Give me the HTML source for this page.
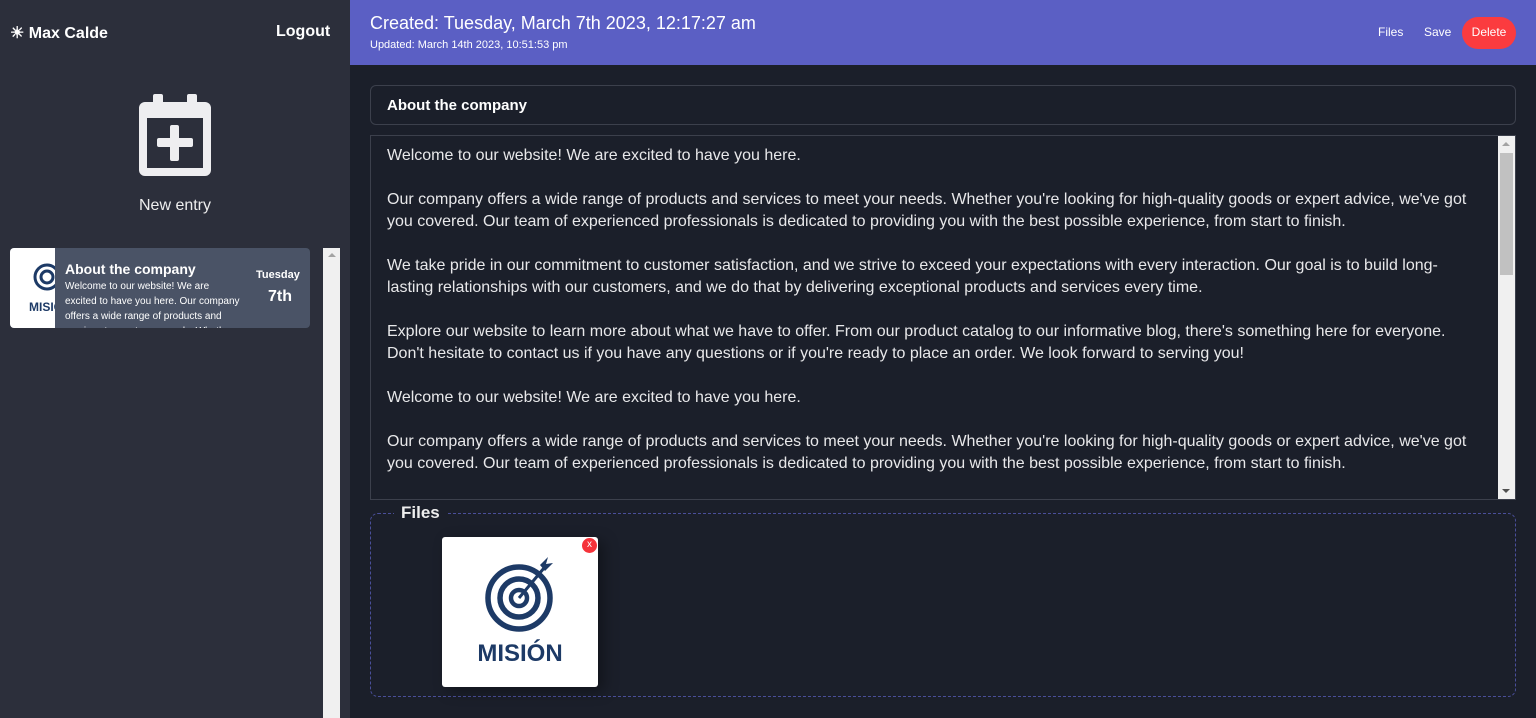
<!DOCTYPE html>
<html><head><style>
*{box-sizing:border-box;margin:0;padding:0}
body{width:1536px;height:718px;overflow:hidden;background:#1b1f2a;font-family:"Liberation Sans",sans-serif;color:#e8e8ea;position:relative}
.side{position:absolute;left:0;top:0;width:350px;height:718px;background:#2c2f3b}
.hdr{position:absolute;left:350px;top:0;width:1186px;height:65px;background:#5b5fc4}
</style></head><body>
<div class="side">
 <div style="position:absolute;left:10px;top:23px;font-size:16px;font-weight:bold;color:#fff">☀ Max Calde</div>
 <div style="position:absolute;left:276px;top:23px;font-size:16px;font-weight:bold;color:#fff">Logout</div>
 <svg style="position:absolute;left:139px;top:94px" width="72" height="82" viewBox="0 0 72 82">
  <rect x="14" y="0" width="10" height="14" rx="2" fill="#eeeef0"/><rect x="48" y="0" width="10" height="14" rx="2" fill="#eeeef0"/>
  <rect x="0" y="8" width="72" height="74" rx="6" fill="#eeeef0"/>
  <rect x="8" y="24" width="56" height="50" fill="#2c2f3b"/>
  <rect x="18" y="44" width="36" height="9" rx="2" fill="#eeeef0"/><rect x="31" y="31" width="9" height="36" rx="2" fill="#eeeef0"/>
 </svg>
 <div style="position:absolute;left:0;width:350px;top:197px;text-align:center;font-size:16px;color:#eee">New entry</div>
 <div style="position:absolute;left:10px;top:248px;width:300px;height:80px;border-radius:4px;background:#4a5366;overflow:hidden">
  <div style="position:absolute;left:0;top:0;width:45px;height:80px;background:#fff;overflow:hidden">
   <svg style="position:absolute;left:22px;top:14px" width="30" height="30"><circle cx="15" cy="15" r="12" fill="none" stroke="#1d3a66" stroke-width="3"/><circle cx="15" cy="15" r="6" fill="none" stroke="#1d3a66" stroke-width="3"/></svg>
   <div style="position:absolute;left:19px;top:52px;font-size:12px;font-weight:bold;color:#1d3a66">MISIÓN</div>
  </div>
  <div style="position:absolute;left:55px;top:13px;font-size:14px;font-weight:bold;color:#fff">About the company</div>
  <div style="position:absolute;left:55px;top:31px;width:176px;font-size:10px;line-height:15px;color:#fff">Welcome to our website! We are excited to have you here. Our company offers a wide range of products and services to meet your needs. Whether</div>
  <div style="position:absolute;left:246px;top:21px;font-size:11px;font-weight:bold;color:#fff">Tuesday</div>
  <div style="position:absolute;left:258px;top:40px;font-size:16px;font-weight:bold;color:#fff">7th</div>
 </div>
 <div style="position:absolute;left:323px;top:248px;width:17px;height:470px;background:#f0f0f0"><div style="margin:5px auto;width:0;height:0;border:4px solid transparent;border-bottom-color:#a3a3a3;border-top:0"></div></div>
</div>
<div class="hdr">
 <div style="position:absolute;left:20px;top:13px;font-size:18px;color:#fff">Created: Tuesday, March 7th 2023, 12:17:27 am</div>
 <div style="position:absolute;left:20px;top:39px;font-size:11px;color:#fff">Updated: March 14th 2023, 10:51:53 pm</div>
 <div style="position:absolute;left:1028px;top:25px;font-size:12px;color:#fff">Files</div>
 <div style="position:absolute;left:1074px;top:25px;font-size:12px;color:#fff">Save</div>
 <div style="position:absolute;left:1112px;top:17px;width:54px;height:32px;border-radius:16px;background:#fb3b3f;color:#fff;font-size:12px;text-align:center;line-height:30px">Delete</div>
</div>
<div style="position:absolute;left:370px;top:85px;width:1146px;height:40px;border:1px solid #3c404c;border-radius:6px;padding:11px 16px;font-size:15px;font-weight:bold;color:#fff">About the company</div>
<div style="position:absolute;left:370px;top:135px;width:1146px;height:365px;border:1px solid #3c404c;overflow:hidden">
 <div style="position:absolute;left:16px;top:9px;width:1088px;font-size:16px;line-height:22px;color:#e8e8ea;white-space:pre-wrap">Welcome to our website! We are excited to have you here.

Our company offers a wide range of products and services to meet your needs. Whether you're looking for high-quality goods or expert advice, we've got you covered. Our team of experienced professionals is dedicated to providing you with the best possible experience, from start to finish.

We take pride in our commitment to customer satisfaction, and we strive to exceed your expectations with every interaction. Our goal is to build long-lasting relationships with our customers, and we do that by delivering exceptional products and services every time.

Explore our website to learn more about what we have to offer. From our product catalog to our informative blog, there's something here for everyone. Don't hesitate to contact us if you have any questions or if you're ready to place an order. We look forward to serving you!

Welcome to our website! We are excited to have you here.

Our company offers a wide range of products and services to meet your needs. Whether you're looking for high-quality goods or expert advice, we've got you covered. Our team of experienced professionals is dedicated to providing you with the best possible experience, from start to finish.</div>
 <div style="position:absolute;right:0;top:0;width:17px;height:363px;background:#f0f0f0">
  <div style="position:absolute;left:4px;top:6px;width:0;height:0;border:4px solid transparent;border-bottom-color:#a3a3a3;border-top:0"></div>
  <div style="position:absolute;left:4px;bottom:6px;width:0;height:0;border:4px solid transparent;border-top-color:#505050;border-bottom:0"></div>
  <div style="position:absolute;left:2px;top:17px;width:13px;height:122px;background:#c1c1c1"></div>
 </div>
</div>
<div style="position:absolute;left:370px;top:513px;width:1146px;height:184px;border:1px dashed #4a4f9a;border-radius:8px"></div>
<div style="position:absolute;left:394px;top:503px;padding:0 7px;background:#1b1f2a;font-size:17px;font-weight:bold;color:#eee">Files</div>
<div style="position:absolute;left:442px;top:537px;width:156px;height:150px;background:#fff;border-radius:3px;box-shadow:6px 4px 14px rgba(0,0,0,.35)">
 <svg style="position:absolute;left:40px;top:16px" width="80" height="80" viewBox="0 0 80 80">
  <circle cx="37" cy="45" r="31" fill="none" stroke="#1d3a66" stroke-width="5.5"/>
  <circle cx="37" cy="45" r="19" fill="none" stroke="#1d3a66" stroke-width="5.5"/>
  <circle cx="37" cy="45" r="8" fill="none" stroke="#1d3a66" stroke-width="4.5"/>
  <line x1="37" y1="45" x2="62" y2="15" stroke="#1d3a66" stroke-width="3"/>
  <path d="M58 12 L66 4 L64 11 L71 10 L63 18 Z" fill="#1d3a66"/>
 </svg>
 <div style="position:absolute;left:0;width:156px;top:103px;text-align:center;font-size:24px;font-weight:bold;color:#1d3a66">MISIÓN</div>
</div>
<div style="position:absolute;left:582px;top:538px;width:15px;height:15px;border-radius:50%;background:#f5333a;color:#fff;font-size:10px;text-align:center;line-height:14px">x</div>
</body></html>
